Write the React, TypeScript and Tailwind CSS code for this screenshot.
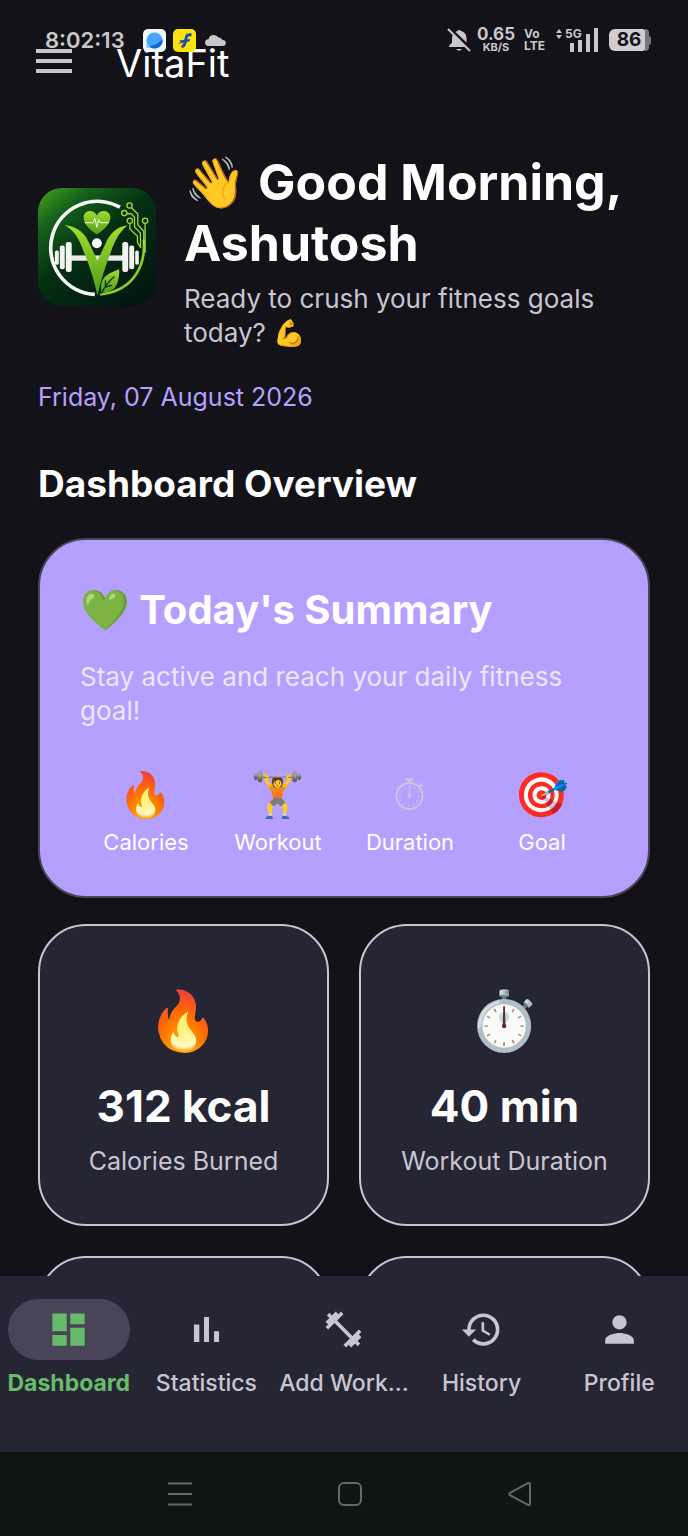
import React, { useState } from "react";
import {
  MdDashboard,
  MdFitnessCenter,
  MdHistory,
  MdPerson,
} from "react-icons/md";

const AppLogo = () => (
  <svg viewBox="24 24 357 357" className="mt-9 w-[118px] h-[118px] shrink-0" role="img" aria-label="VitaFit logo">
    <defs>
      <linearGradient id="logoBg" x1="0" y1="0" x2="0.8" y2="1">
        <stop offset="0" stopColor="#4aa51c" />
        <stop offset="0.22" stopColor="#15611c" />
        <stop offset="0.5" stopColor="#043012" />
        <stop offset="1" stopColor="#02150f" />
      </linearGradient>
      <linearGradient id="logoLeaf" x1="0" y1="0" x2="0" y2="1">
        <stop offset="0" stopColor="#a5dc2f" />
        <stop offset="1" stopColor="#4c9d17" />
      </linearGradient>
    </defs>
    <rect x="24" y="24" width="357" height="357" rx="72" fill="url(#logoBg)" />
    <path d="M272 82 A141 141 0 1 0 196 346" fill="none" stroke="#f4f6f4" strokeWidth="11" />
    <path d="M344 180 C350 250 320 335 212 346" fill="none" stroke="#8ccb2a" strokeWidth="8" />
    <g fill="none" stroke="#9fd63a" strokeWidth="4">
      <circle cx="301" cy="77" r="8" />
      <circle cx="285" cy="100" r="8" />
      <circle cx="302" cy="123" r="8" />
      <circle cx="348" cy="123" r="8" />
      <path d="M306 83 L326 103 V135 L344 155 V215" />
      <path d="M292 102 H306 L316 113 V142 L334 160 V205" />
      <path d="M302 131 V148 L325 170 V190 L336 205" />
      <path d="M348 131 V220" />
    </g>
    <rect x="120" y="228" width="164" height="16" fill="#e8ebe8" />
    <g fill="#f2f4f2">
      <rect x="75" y="213" width="12" height="43" rx="5" />
      <rect x="90" y="198" width="15" height="72" rx="6" />
      <rect x="108" y="187" width="18" height="91" rx="7" />
      <rect x="279" y="187" width="18" height="91" rx="7" />
      <rect x="300" y="198" width="15" height="72" rx="6" />
      <rect x="318" y="213" width="11" height="43" rx="5" />
    </g>
    <path
      d="M104 136 C150 142 168 165 181 195 L204 244 L227 195 C240 165 258 142 295 137 C268 160 257 184 245 216 C230 255 212 310 204 350 C195 305 178 255 162 216 C148 178 135 153 104 136 Z"
      fill="url(#logoLeaf)"
    />
    <circle cx="202" cy="191" r="15" fill="#f7f8f7" />
    <path d="M202 165 C180 149 162 133 162 113 C162 90 192 86 202 107 C212 86 243 90 243 113 C243 133 224 149 202 165 Z" fill="url(#logoLeaf)" />
    <path d="M166 129 H191 L196 116 L202 143 L207 120 L212 129 H238" fill="none" stroke="#f4ffe6" strokeWidth="3" />
    <path d="M216 340 C210 300 225 286 270 270 C270 310 260 342 216 340 Z" fill="url(#logoLeaf)" />
    <path d="M215 344 C228 318 240 305 255 292 M228 321 V303 M226 325 L248 318" fill="none" stroke="#06361a" strokeWidth="4" />
  </svg>
);

const OutlineStopwatch = () => (
  <svg viewBox="0 0 30 34" className="w-[30px] h-[34px]" fill="none" stroke="#cbc3de" strokeWidth="2">
    <circle cx="14.5" cy="19" r="13" />
    <path d="M14.5 19 V8.500" strokeWidth="1.500" />
    <path d="M14.5 6 V3" strokeWidth="3" />
    <path d="M11 2.5 H18" strokeWidth="3" />
    <path d="M24 10 L26 8 M25 6.500 L28 9.500" />
    <circle cx="14.5" cy="19" r="9.5" strokeDasharray="1.200 3.774" />
    <circle cx="14.5" cy="19" r="1.8" fill="#cbc3de" stroke="none" />
  </svg>
);

const BarsIcon = ({ className }: { className?: string }) => (
  <svg viewBox="0 0 24 24" className={className} fill="currentColor">
    <path d="M5 9.200 H8 V19 H5 Z M10.600 5 H13.400 V19 H10.600 Z M16.200 13 H19 V19 H16.200 Z" />
  </svg>
);

const StatusBar = () => (
  <div className="absolute inset-x-0 top-0 z-10 flex h-20 items-center justify-between pl-[45px] pr-[37px] text-[#c8c8c8] pointer-events-none">
    <div className="flex items-center">
      <span className="w-[98px] text-[22px] font-semibold">8:02:13</span>
      <svg viewBox="0 0 23 23" className="w-[23px] h-[23px] mr-[7px]">
        <rect width="23" height="23" rx="5" fill="#f2f7fb" />
        <circle cx="11.5" cy="11.5" r="8" fill="#45a6f8" />
        <path d="M19.400 10 A8 8 0 0 1 6 17.200 C11 17 16 14 19.400 10 Z" fill="#1266dd" />
        <path d="M3.500 14 L7.500 18.500 L3.500 19 Z" fill="#7cc7fb" />
      </svg>
      <svg viewBox="0 0 23 23" className="w-[23px] h-[23px] mr-[9px]">
        <rect width="23" height="23" rx="5" fill="#fde30b" />
        <path d="M18.500 6 C14.500 5 13.500 6.500 13 9.500 L12 14 C11.500 16.500 10.500 17.500 8.500 17.500" fill="none" stroke="#1f4ea8" strokeWidth="3" />
        <path d="M6 11.500 L17 10 L16.500 12.500 L4 15 L8 13 Z" fill="#1f4ea8" />
      </svg>
      <svg viewBox="0 0 21 12" className="w-[21px] h-[12px]" fill="#c8c8c8">
        <path d="M3.500 12 A3.400 3.400 0 0 1 3.500 5.200 A5.500 5.500 0 0 1 13.500 3.500 A4 4 0 0 1 17.500 6 A3 3 0 0 1 18 12 Z" />
      </svg>
    </div>
    <div className="flex items-center font-bold">
      <svg viewBox="0 0 24 24" className="w-6 h-6 mr-[5px]" fill="#c8c8c8">
        <path d="M2 19 V18 L5 14.500 V10 Q5 8 6 6.500 L18.500 19 Z" />
        <path d="M8.500 4 Q10 3 11 2.800 Q12 0.500 13.500 2.800 Q19.500 4.500 19.500 10 V14.500 Z" />
        <path d="M9 21 H15 Q12 24.500 9 21 Z" />
        <path d="M1 1 L23 23" stroke="#c8c8c8" strokeWidth="2" />
      </svg>
      <div className="w-10 text-center">
        <div className="text-[17px] leading-[14px]">0.65</div>
        <div className="text-[11px] leading-[12px]">KB/S</div>
      </div>
      <div className="ml-2 w-6 text-[12px] leading-[12px]">
        <div>Vo</div>
        <div>LTE</div>
      </div>
      <div className="relative ml-2 h-6 w-[43px]">
        <svg viewBox="0 0 43 24" className="w-[43px] h-6" fill="#c8c8c8">
          <path d="M0 5 L3 1 L6 5 Z M0 7 L3 11 L6 7 Z" />
          <rect x="14" y="15" width="4" height="9" />
          <rect x="22" y="12" width="4" height="12" />
          <rect x="30" y="6" width="4" height="18" />
          <rect x="38" y="0" width="4" height="24" />
        </svg>
        <span className="absolute left-[9px] top-0 text-[12px] leading-[11px]">5G</span>
      </div>
      <div className="ml-2.5 flex items-center">
        <span className="h-[22px] w-9 rounded-l-[6px] rounded-r-[2px] bg-[#cfcfcf] pl-1 text-center text-[19px] leading-[22px] text-[#14131a]">
          86
        </span>
        <span className="h-[22px] w-1 rounded-r-[4px] bg-[#77777a]" />
        <span className="h-[9px] w-0.5 rounded-r bg-[#77777a]" />
      </div>
    </div>
  </div>
);

const summaryItems = [
  { label: "Calories", icon: "🔥" },
  { label: "Workout", icon: "🏋️" },
  { label: "Duration", icon: null },
  { label: "Goal", icon: "🎯" },
];

const stats = [
  { icon: "🔥", value: "312 kcal", label: "Calories Burned" },
  { icon: "⏱️", value: "40 min", label: "Workout Duration" },
];

const tabs = [
  { label: "Dashboard", Icon: MdDashboard },
  { label: "Statistics", Icon: BarsIcon },
  { label: "Add Work...", Icon: MdFitnessCenter },
  { label: "History", Icon: MdHistory },
  { label: "Profile", Icon: MdPerson },
];

const App = () => {
  const [activeTab, setActiveTab] = useState("Dashboard");

  return (
    <div className="relative flex h-screen flex-col overflow-hidden bg-[#131218] font-['Inter','Noto_Color_Emoji',sans-serif] text-white">
      <StatusBar />

      <header className="flex h-[126px] shrink-0 items-center px-9">
        <button type="button" aria-label="Open menu" className="flex w-9 flex-col gap-[6px] pb-1">
          <span className="h-1 w-9 bg-[#c9c5d0]" />
          <span className="h-1 w-9 bg-[#c9c5d0]" />
          <span className="h-1 w-9 bg-[#c9c5d0]" />
        </button>
        <h1 className="ml-11 text-[38px] leading-[44px]">VitaFit</h1>
      </header>

      <main className="min-h-0 flex-1 overflow-hidden px-[38px] pt-[26px]">
        <section className="flex items-start gap-7">
          <AppLogo />
          <div>
            <h2 className="text-[50px] font-bold leading-[61px]">👋 Good Morning, Ashutosh</h2>
            <p className="mt-2 mb-0.5 text-[26px] leading-[34px] text-[#c9c5d0]">
              Ready to crush your fitness goals today? 💪
            </p>
          </div>
        </section>

        <p className="mt-7 text-[25px] leading-[34px] text-[#b6a0ff]">Friday, 07 August 2026</p>
        <h2 className="mt-11 text-[37px] font-bold leading-[52px]">Dashboard Overview</h2>

        <section className="mt-7 rounded-[48px] border-2 border-[#4a4458] bg-[#b6a0ff] px-10 pt-10 pb-9 shadow-lg">
          <h3 className="text-[40px] font-bold leading-[60px]">💚 Today's Summary</h3>
          <p className="mt-5 text-[26px] leading-[34px] text-[#ece6fb]">
            Stay active and reach your daily fitness goal!
          </p>
          <ul className="mt-9 grid grid-cols-4 text-center">
            {summaryItems.map((item) => (
              <li key={item.label}>
                <div className="flex h-[60px] items-center justify-center text-[44px] leading-[56px]">
                  {item.icon ?? <OutlineStopwatch />}
                </div>
                <div className="text-[22px] leading-[36px]">{item.label}</div>
              </li>
            ))}
          </ul>
        </section>

        <section className="mt-[26px] grid grid-cols-2 gap-[30px]">
          {stats.map((stat) => (
            <div
              key={stat.label}
              className="flex h-[302px] flex-col items-center rounded-[48px] border-2 border-[#c9c5d0] bg-[#262534] pt-[54px]"
            >
              <div className="text-[58px] leading-[80px]">{stat.icon}</div>
              <div className="mt-4 text-[44px] font-bold leading-[60px]">{stat.value}</div>
              <div className="mt-2 text-[25px] leading-[34px] text-[#c9c5d0]">{stat.label}</div>
            </div>
          ))}
          <div className="h-[302px] rounded-[48px] border-2 border-[#c9c5d0] bg-[#262534]" />
          <div className="h-[302px] rounded-[48px] border-2 border-[#c9c5d0] bg-[#262534]" />
        </section>
      </main>

      <nav className="grid h-44 shrink-0 grid-cols-5 bg-[#262534] pt-[23px]">
        {tabs.map(({ label, Icon }) => {
          const active = label === activeTab;
          return (
            <button
              key={label}
              type="button"
              onClick={() => setActiveTab(label)}
              className={
                active
                  ? "flex flex-col items-center text-[23px] font-bold text-[#66bb6a]"
                  : "flex flex-col items-center text-[23px] font-medium text-[#c9c5d0]"
              }
            >
              <span
                className={
                  active
                    ? "flex h-[61px] w-[122px] items-center justify-center rounded-full bg-[#4a4458]"
                    : "flex h-[61px] w-[122px] items-center justify-center"
                }
              >
                <Icon className="h-[43px] w-[43px]" />
              </span>
              <span className="mt-1.5 whitespace-nowrap leading-[34px]">{label}</span>
            </button>
          );
        })}
      </nav>

      <footer className="flex h-[84px] shrink-0 items-center justify-center gap-[146px] bg-[#0e1614] pl-3">
        <button type="button" aria-label="Recent apps">
          <svg viewBox="0 0 24 24" className="h-6 w-6" fill="none" stroke="#626967" strokeWidth="2">
            <path d="M0 1.500 H24 M0 12 H24 M0 22.500 H24" />
          </svg>
        </button>
        <button type="button" aria-label="Home">
          <svg viewBox="0 0 24 24" className="h-6 w-6" fill="none" stroke="#626967" strokeWidth="2">
            <rect x="1" y="1" width="22" height="22" rx="5" />
          </svg>
        </button>
        <button type="button" aria-label="Back">
          <svg viewBox="0 0 24 24" className="h-6 w-6" fill="none" stroke="#626967" strokeWidth="2">
            <path d="M2 10.800 L20 1.200 Q22 0.500 22 2.500 V21.500 Q22 23.500 20 22.800 L2 13.200 Q0.500 12 2 10.800 Z" />
          </svg>
        </button>
      </footer>
    </div>
  );
};

export default App;
